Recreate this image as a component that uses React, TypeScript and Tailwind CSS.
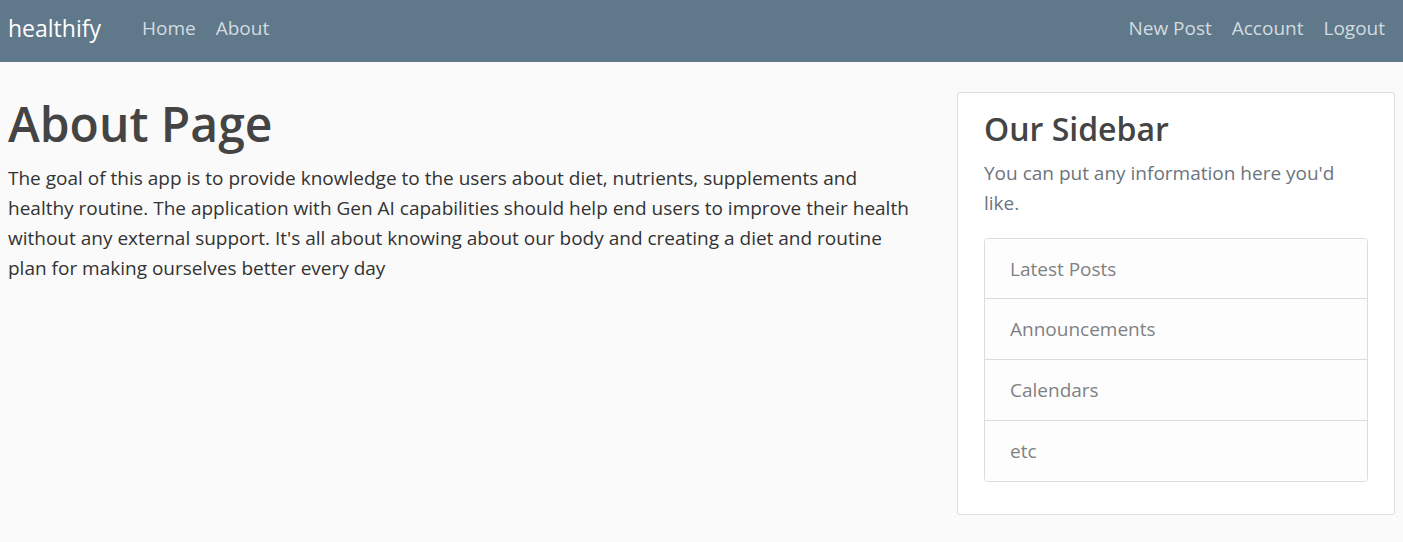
import React from "react";

export default function App() {
  const font = { fontFamily: '"Open Sans", "Noto Sans", sans-serif' };
  const items = ["Latest Posts", "Announcements", "Calendars", "etc"];
  return (
    <div className="min-h-[542px] bg-[#fafafa] text-[#333333]" style={font}>
      <nav className="flex h-[62px] items-center bg-[#5f788a] pl-2 pr-[18px] pb-[5px]">
        <span className="text-[23px] text-white">healthify</span>
        <div className="ml-[41px] flex gap-[20px] text-[19px] text-[#d3dbe0]">
          <span>Home</span>
          <span>About</span>
        </div>
        <div className="ml-auto flex gap-[20px] text-[19px] text-[#d3dbe0]">
          <span>New Post</span>
          <span>Account</span>
          <span>Logout</span>
        </div>
      </nav>
      <div className="flex items-start gap-[34px] px-2 pt-[30px]">
        <main className="flex-1 pr-[10px] pt-[3px]">
          <h1 className="text-[48px] font-semibold leading-[1.2] text-[#444444]">About Page</h1>
          <p className="mt-[10px] text-[19px] leading-[30px]">
            The goal of this app is to provide knowledge to the users about diet, nutrients, supplements and healthy routine. The application with Gen AI capabilities should help end users to improve their health without any external support. It's all about knowing about our body and creating a diet and routine plan for making ourselves better every day
          </p>
        </main>
        <aside className="w-[438px]">
          <div className="rounded-[3px] border border-[#dddddd] bg-white px-[26px] pt-[17px] pb-[32px]">
            <h3 className="text-[32px] font-semibold leading-[1.2] text-[#444444]">Our Sidebar</h3>
            <p className="mt-[10px] text-[19px] leading-[30px] text-[#6c757d]">
              You can put any information here you'd like.
            </p>
            <ul className="mt-[20px] overflow-hidden rounded-[4px] border border-[#dcdcdc]">
              {items.map((t, i) => (
                <li
                  key={t}
                  className={
                    i === 0
                      ? "flex h-[59px] items-center bg-[#fdfdfe] px-[25px] text-[19px] text-[#818182]"
                      : "flex h-[61px] items-center border-t border-[#dcdcdc] bg-[#fdfdfe] px-[25px] text-[19px] text-[#818182]"
                  }
                >
                  {t}
                </li>
              ))}
            </ul>
          </div>
        </aside>
      </div>
    </div>
  );
}
